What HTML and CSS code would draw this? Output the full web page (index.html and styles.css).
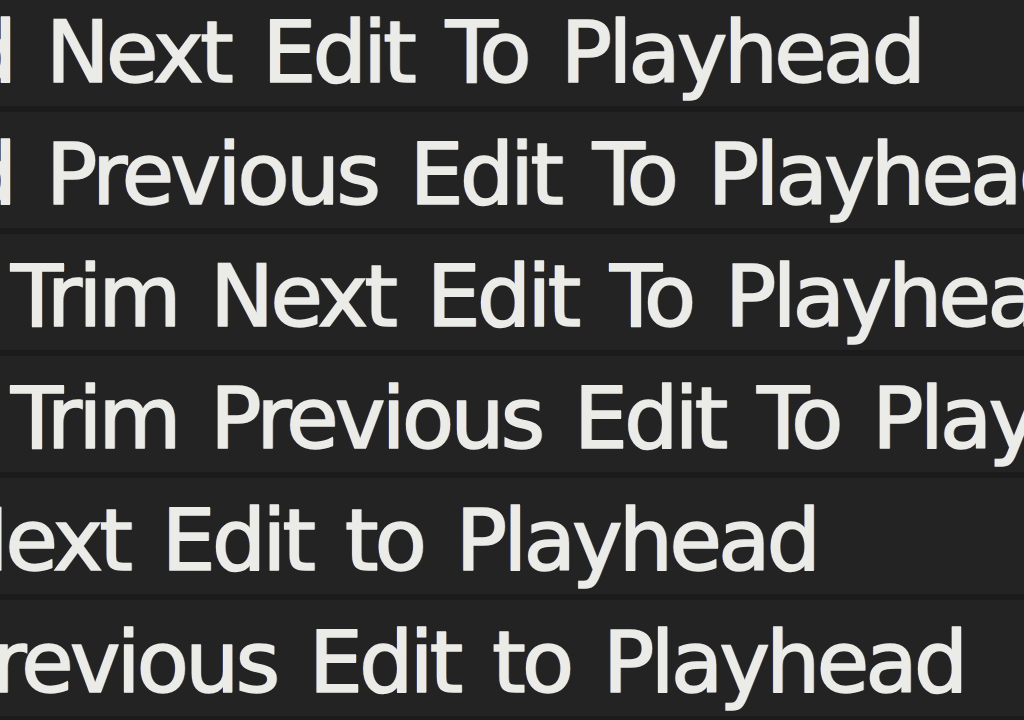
FILE: index.html
```html
<!DOCTYPE html>
<html lang="en">
<head>
<meta charset="utf-8">
<title>Commands</title>
<link rel="stylesheet" href="styles.css">
</head>
<body>
<ul class="list">
  <li class="row row--extend"><span class="label">Extend Next Edit To Playhead</span></li>
  <li class="row row--extend"><span class="label">Extend Previous Edit To Playhead</span></li>
  <li class="row row--ripple"><span class="label">Ripple Trim Next Edit To Playhead</span></li>
  <li class="row row--ripple"><span class="label">Ripple Trim Previous Edit To Playhead</span></li>
  <li class="row row--trim"><span class="label">Trim Next Edit to Playhead</span></li>
  <li class="row row--trim"><span class="label">Trim Previous Edit to Playhead</span></li>
</ul>
</body>
</html>
```

FILE: styles.css
```css
html, body {
  margin: 0;
  padding: 0;
  height: 100%;
  background: #232323;
  overflow: hidden;
}

.list {
  list-style: none;
  margin: -10px 0 0 0;
  padding: 0;
}

.row {
  height: 116px;
  border-bottom: 6px solid #1b1b1b;
  overflow: hidden;
  white-space: nowrap;
}

.label {
  display: block;
  margin-left: -263px;
  padding-top: 10px;
  line-height: 106px;
  font-family: "DejaVu Sans", "Liberation Sans", sans-serif;
  font-size: 85px;
  letter-spacing: -3.5px;
  word-spacing: 9px;
  color: #ebebe8;
  -webkit-text-stroke: 1.6px #ebebe8;
  text-shadow: -1.5px 0 0 rgba(60, 90, 180, 0.55), 1.5px 0 0 rgba(190, 140, 90, 0.5);
}

.row--ripple .label {
  margin-left: -267px;
}

.row--trim .label {
  margin-left: -254px;
}
```
